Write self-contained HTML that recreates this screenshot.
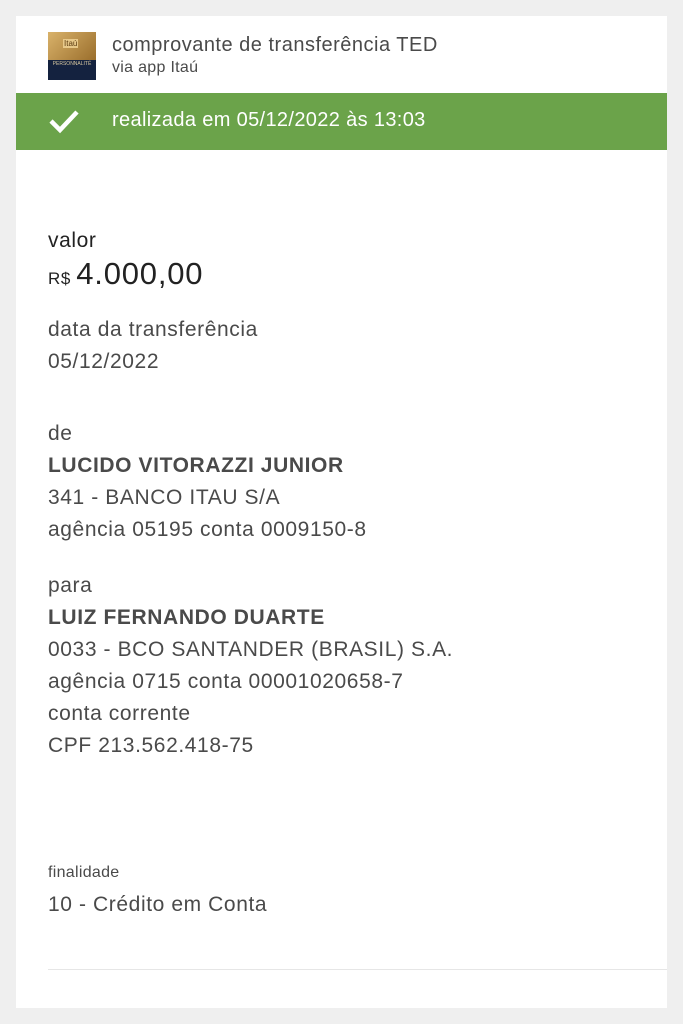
<!DOCTYPE html>
<html><head><meta charset="utf-8"><style>
body{margin:0;width:683px;height:1024px;background:#efefef;font-family:"Liberation Sans",sans-serif;color:#4a4a4a;position:relative;overflow:hidden}
.card{position:absolute;left:16px;top:16px;width:651px;height:992px;background:#fff}
.t{position:absolute;white-space:nowrap;font-size:21px;line-height:24px;letter-spacing:0.6px}
.b{font-weight:bold}
</style></head><body>
<div class="card"></div>
<div style="position:absolute;left:48px;top:32px;width:48px;height:48px;">
 <div style="height:28px;background:linear-gradient(135deg,#d9b26a,#9a6e2c);position:relative"><span style="position:absolute;left:15px;top:7px;font-size:8px;color:#5a3a10;background:#e8c98a;padding:0 1px">Itaú</span></div>
 <div style="height:20px;background:#14223f;color:#d7c7a0;font-size:5px;text-align:center;line-height:8px">PERSONNALITÉ</div>
</div>
<div class="t" style="left:112px;top:33px;font-size:20px;letter-spacing:0.5px">comprovante de transferência TED</div>
<div class="t" style="left:112px;top:58px;font-size:16px;line-height:20px;letter-spacing:0.3px">via app Itaú</div>
<div style="position:absolute;left:16px;top:93px;width:651px;height:57px;background:#6ba34a"></div>
<svg style="position:absolute;left:48px;top:108px" width="32" height="26" viewBox="0 0 32 26"><path d="M3 13 L12 22 L29 4" stroke="#fff" stroke-width="4.5" fill="none"/></svg>
<div class="t" style="left:112px;top:108px;color:#fff;font-size:20px;letter-spacing:0.35px">realizada em 05/12/2022 às 13:03</div>
<div class="t" style="left:48px;top:229px;color:#222">valor</div>
<div class="t" style="left:48px;top:262px;font-size:17px;color:#222">R$ <span style="font-size:31px;letter-spacing:0.8px">4.000,00</span></div>
<div class="t" style="left:48px;top:318px">data da transferência</div>
<div class="t" style="left:48px;top:350px">05/12/2022</div>
<div class="t" style="left:48px;top:422px">de</div>
<div class="t b" style="left:48px;top:454px">LUCIDO VITORAZZI JUNIOR</div>
<div class="t" style="left:48px;top:486px">341 - BANCO ITAU S/A</div>
<div class="t" style="left:48px;top:518px">agência 05195 conta 0009150-8</div>
<div class="t" style="left:48px;top:574px">para</div>
<div class="t b" style="left:48px;top:606px">LUIZ FERNANDO DUARTE</div>
<div class="t" style="left:48px;top:638px">0033 - BCO SANTANDER (BRASIL) S.A.</div>
<div class="t" style="left:48px;top:670px">agência 0715 conta 00001020658-7</div>
<div class="t" style="left:48px;top:702px">conta corrente</div>
<div class="t" style="left:48px;top:734px">CPF 213.562.418-75</div>
<div class="t" style="left:48px;top:863px;font-size:16px;line-height:20px;letter-spacing:0.3px">finalidade</div>
<div class="t" style="left:48px;top:893px">10 - Crédito em Conta</div>
<div style="position:absolute;left:48px;top:969px;width:619px;height:1px;background:#e6e6e6"></div>
</body></html>
